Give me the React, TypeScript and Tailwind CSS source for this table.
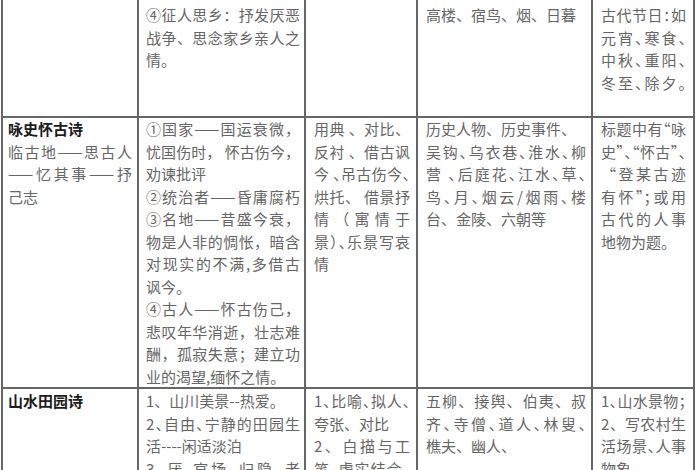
import React from "react";

type L = { t: string; j?: boolean; h?: boolean; b?: boolean };

function Line({ l }: { l: L }) {
  const cls = [
    "whitespace-nowrap",
    l.j ? "text-justify [text-align-last:justify]" : "",
    l.h ? "[font-feature-settings:'halt']" : "",
    l.b ? "font-bold text-[#1c1c1c]" : "",
  ].join(" ");
  return <div className={cls}>{l.t}</div>;
}

function Cell({ lines, pad, first }: { lines: L[]; pad: string; first?: boolean }) {
  return (
    <div
      className={
        "border-r-2 border-b-2 border-[#666] overflow-hidden " +
        pad +
        (first ? " border-l-2" : "")
      }
    >
      {lines.map((l, i) => (
        <Line key={i} l={l} />
      ))}
    </div>
  );
}

const rows: { pt: string; cells: L[][] }[] = [
  {
    pt: "pt-[4px]",
    cells: [
      [],
      [
        { t: "④征人思乡：抒发厌恶", j: true },
        { t: "战争、思念家乡亲人之", j: true },
        { t: "情。" },
      ],
      [],
      [{ t: "高楼、宿鸟、烟、日暮" }],
      [
        { t: "古代节日：如", j: true, h: true },
        { t: "元宵、寒食、", j: true, h: true },
        { t: "中秋、重阳、", j: true, h: true },
        { t: "冬至、除夕。", j: true, h: true },
      ],
    ],
  },
  {
    pt: "pt-0",
    cells: [
      [
        { t: "咏史怀古诗", b: true },
        { t: "临古地——思古人", j: true },
        { t: "——忆其事——抒", j: true },
        { t: "己志" },
      ],
      [
        { t: "①国家——国运衰微，", j: true },
        { t: "忧国伤时， 怀古伤今，", j: true },
        { t: "劝谏批评" },
        { t: "②统治者——昏庸腐朽", j: true },
        { t: "③名地——昔盛今衰，", j: true },
        { t: "物是人非的惆怅，暗含", j: true },
        { t: "对现实的不满,多借古", j: true },
        { t: "讽今。" },
        { t: "④古人——怀古伤己，", j: true },
        { t: "悲叹年华消逝，壮志难", j: true },
        { t: "酬，孤寂失意；建立功", j: true },
        { t: "业的渴望,缅怀之情。" },
      ],
      [
        { t: "用典 、对比、", j: true },
        { t: "反衬 、借古讽", j: true },
        { t: "今 、吊古伤今、", j: true, h: true },
        { t: "烘托、 借景抒", j: true },
        { t: "情（寓情于", j: true },
        { t: "景）、乐景写哀", j: true, h: true },
        { t: "情" },
      ],
      [
        { t: "历史人物、历史事件、" },
        { t: "吴钩、乌衣巷、淮水、柳", j: true, h: true },
        { t: "营 、后庭花、江水、草、", j: true, h: true },
        { t: "鸟、月、烟云/烟雨、楼", j: true, h: true },
        { t: "台、金陵、六朝等" },
      ],
      [
        { t: "标题中有“咏", j: true, h: true },
        { t: "史”、“怀古”、", j: true, h: true },
        { t: "“登某古迹", j: true },
        { t: "有怀”；或用", j: true, h: true },
        { t: "古代的人事", j: true },
        { t: "地物为题。" },
      ],
    ],
  },
  {
    pt: "pt-[1px]",
    cells: [
      [{ t: "山水田园诗", b: true }],
      [
        { t: "1、山川美景--热爱。" },
        { t: "2、自由、宁静的田园生", j: true, h: true },
        { t: "活----闲适淡泊" },
        { t: "3、厌-官场、归隐、老", j: true, h: true },
      ],
      [
        { t: "1、比喻、拟人、", j: true, h: true },
        { t: "夸张、对比" },
        { t: "2、白描与工", j: true },
        { t: "笔、虚实结合、", j: true, h: true },
      ],
      [
        { t: "五柳、接舆、伯夷、叔", j: true },
        { t: "齐、寺僧、道人、林叟、", j: true, h: true },
        { t: "樵夫、幽人、" },
      ],
      [
        { t: "1、山水景物；", j: true, h: true },
        { t: "2、写农村生", j: true },
        { t: "活场景、人事", j: true, h: true },
        { t: "物象" },
      ],
    ],
  },
];

const padX = ["pl-[5px] pr-[5px]", "pl-[7px] pr-[4px]", "pl-[8px] pr-[6px]", "pl-[8px] pr-[5px]", "pl-[8px] pr-[7px]"];

export default function App() {
  return (
    <div className="w-[700px] h-[470px] overflow-hidden bg-white">
      <div
        className="ml-[1px] grid grid-cols-[138px_167px_112px_175px_102px] grid-rows-[118px_271px_200px] text-[15px] leading-[22.5px] text-[#666]"
        style={{ fontFamily: '"Noto Sans CJK SC", "Noto Sans", sans-serif' }}
      >
        {rows.map((r, ri) =>
          r.cells.map((c, ci) => (
            <Cell key={ri + "-" + ci} lines={c} pad={r.pt + " " + padX[ci]} first={ci === 0} />
          ))
        )}
      </div>
    </div>
  );
}
